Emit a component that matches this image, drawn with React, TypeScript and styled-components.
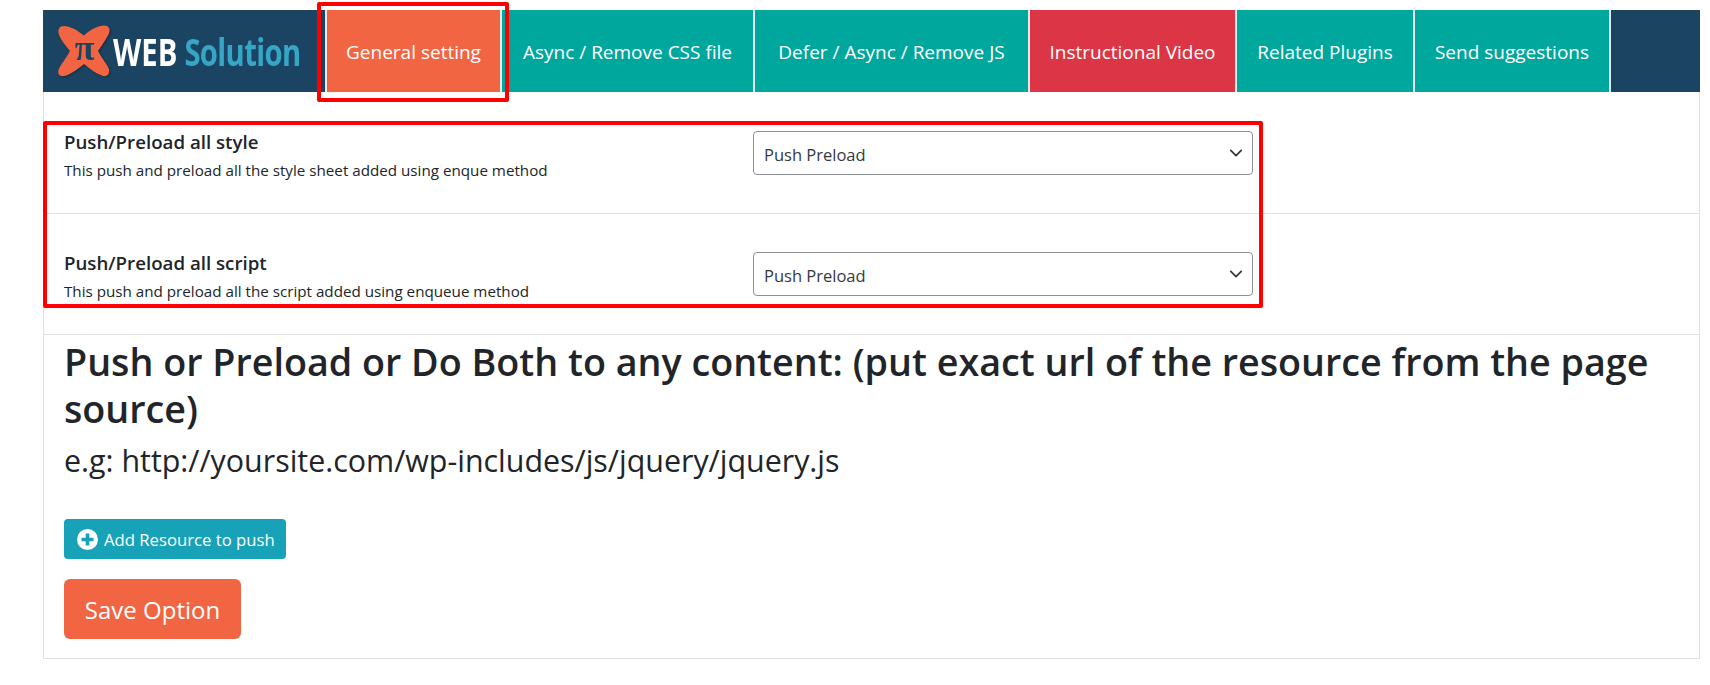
import React from "react";
import styled, { createGlobalStyle } from "styled-components";

const chevron =
  "data:image/svg+xml,%3csvg xmlns='http://www.w3.org/2000/svg' viewBox='0 0 16 16'%3e%3cpath fill='none' stroke='%23343a40' stroke-linecap='round' stroke-linejoin='round' stroke-width='2' d='m2 5 6 6 6-6'/%3e%3c/svg%3e";

const GlobalStyle = createGlobalStyle`
  html, body {
    margin: 0;
    padding: 0;
    background: #fff;
    font-family: "Open Sans", "Noto Sans", sans-serif;
    color: #212529;
    overflow: hidden;
  }
  * { box-sizing: border-box; }
`;

const Page = styled.div`
  position: relative;
  width: 1710px;
  height: 685px;
  padding: 10px 10px 0 43px;
`;

const Card = styled.div`
  border: 1px solid #e0e0e0;
  border-top: 0;
  height: 649px;
  display: flex;
  flex-direction: column;
`;

const Nav = styled.nav`
  display: flex;
  height: 82px;
  margin-left: -1px;
  margin-right: -1px;
  background: #1b4462;
`;

const Brand = styled.div`
  width: 282px;
  display: flex;
  align-items: center;
  padding-left: 14px;
  flex: none;
`;

const BrandText = styled.div`
  display: flex;
  gap: 9px;
  margin-left: 2px;
  font-weight: 700;
  font-size: 37px;
  line-height: 1;
  transform: scaleX(0.79);
  transform-origin: left center;
  white-space: nowrap;
`;

const BrandWeb = styled.span`
  color: #fff;
`;

const BrandSolution = styled.span`
  color: #36a6c6;
  letter-spacing: -0.8px;
`;

const Tab = styled.a<{ $bg: string; $w: number; $first?: boolean }>`
  flex: none;
  width: ${(p) => p.$w}px;
  display: flex;
  align-items: center;
  justify-content: center;
  padding-top: 2px;
  background: ${(p) => p.$bg};
  color: #fff;
  font-size: 19px;
  white-space: nowrap;
  border-right: 2px solid #e4e9ea;
  border-left: ${(p) => (p.$first ? "2px solid #e4e9ea" : "0")};
`;

const Rows = styled.div`
  padding-top: 1px;
`;

const Row = styled.div`
  height: 121px;
  padding: 38px 0 0 20px;
  display: flex;
  border-bottom: 1px solid #dee2e6;
`;

const RowText = styled.div`
  width: 689px;
  margin-top: -1px;
`;

const RowTitle = styled.div`
  font-size: 18.7px;
  font-weight: 600;
  line-height: 24px;
`;

const RowDesc = styled.div`
  font-size: 15.2px;
  line-height: 20px;
  margin-top: 6px;
`;

const Select = styled.select`
  appearance: none;
  width: 500px;
  height: 44px;
  padding: 3px 36px 0 10px;
  border: 1px solid #8c8f94;
  border-radius: 4px;
  background: #fff url("${chevron}") no-repeat right 9px center / 14px 14px;
  font-family: inherit;
  font-size: 16.5px;
  color: #343a40;
`;

const Body = styled.div`
  padding: 0 20px;
`;

const Heading = styled.h2`
  margin: 3px 0 0;
  font-size: 37.7px;
  line-height: 47px;
  font-weight: 600;
`;

const Example = styled.div`
  font-size: 30.4px;
  line-height: 42px;
  margin-top: 8px;
`;

const AddButton = styled.button`
  display: flex;
  align-items: center;
  gap: 6px;
  margin-top: 37px;
  width: 222px;
  height: 40px;
  padding: 0 13px;
  border: 0;
  border-radius: 4px;
  background: #17a2b8;
  color: #fff;
  font-family: inherit;
  font-size: 16.7px;
  white-space: nowrap;
`;

const SaveButton = styled.button`
  display: block;
  margin-top: 20px;
  width: 177px;
  height: 60px;
  border: 0;
  border-radius: 6px;
  background: #f16543;
  color: #fff;
  font-family: inherit;
  font-size: 24px;
`;

const Annotation = styled.div<{ $x: number; $y: number; $w: number; $h: number }>`
  position: absolute;
  left: ${(p) => p.$x}px;
  top: ${(p) => p.$y}px;
  width: ${(p) => p.$w}px;
  height: ${(p) => p.$h}px;
  border: 4px solid #fe0000;
  border-radius: 2px;
  pointer-events: none;
`;

const Logo = () => (
  <svg width="54" height="54" viewBox="0 0 54 54" style={{ flex: "none", filter: "drop-shadow(1px 1px 1px rgba(0,0,0,.35))" }}>
    <path
      d="M4 2.5C9 0.5 18 4 27 11.5C35 4 45 0 50 2C54 4 53 9 49 15C46 20 43 24 41 27C44 33 50 40 52 45C53 50 50 53 46 52C40 50 33 45 27 40C21 45 13 51 7 52C2 53 0 49 2 45C4 40 10 33 13 27C8 21 3 15 1.5 9C1 6 2 3.5 4 2.5Z"
      fill="#f16543"
    />
    <text x="27.5" y="36" textAnchor="middle" fontFamily="'Liberation Serif', serif" fontWeight="700" fontSize="36" fill="#1b4462">
      π
    </text>
  </svg>
);

const PlusIcon = () => (
  <svg width="21" height="21" viewBox="0 0 21 21" style={{ flex: "none" }}>
    <circle cx="10.5" cy="10.5" r="10.5" fill="#fff" />
    <path d="M10.5 4.5v12M4.5 10.5h12" stroke="#17a2b8" strokeWidth="3.6" />
  </svg>
);

const tabs = [
  { label: "General setting", bg: "#f16543", w: 177, first: true },
  { label: "Async / Remove CSS file", bg: "#00a79d", w: 253 },
  { label: "Defer / Async / Remove JS", bg: "#00a79d", w: 275 },
  { label: "Instructional Video", bg: "#dc3545", w: 207 },
  { label: "Related Plugins", bg: "#00a79d", w: 178 },
  { label: "Send suggestions", bg: "#00a79d", w: 196 },
];

const rows = [
  { title: "Push/Preload all style", desc: "This push and preload all the style sheet added using enque method" },
  { title: "Push/Preload all script", desc: "This push and preload all the script added using enqueue method" },
];

export default function App() {
  return (
    <Page>
      <GlobalStyle />
      <Card>
        <Nav>
          <Brand>
            <Logo />
            <BrandText>
              <BrandWeb>WEB</BrandWeb>
              <BrandSolution>Solution</BrandSolution>
            </BrandText>
          </Brand>
          {tabs.map((t) => (
            <Tab key={t.label} $bg={t.bg} $w={t.w} $first={t.first}>
              {t.label}
            </Tab>
          ))}
        </Nav>
        <Rows>
          {rows.map((r) => (
            <Row key={r.title}>
              <RowText>
                <RowTitle>{r.title}</RowTitle>
                <RowDesc>{r.desc}</RowDesc>
              </RowText>
              <Select defaultValue="push">
                <option value="push">Push Preload</option>
              </Select>
            </Row>
          ))}
        </Rows>
        <Body>
          <Heading>Push or Preload or Do Both to any content: (put exact url of the resource from the page source)</Heading>
          <Example>e.g: http://yoursite.com/wp-includes/js/jquery/jquery.js</Example>
          <AddButton>
            <PlusIcon />
            Add Resource to push
          </AddButton>
          <SaveButton>Save Option</SaveButton>
        </Body>
      </Card>
      <Annotation $x={317} $y={2} $w={192} $h={100} />
      <Annotation $x={43} $y={121} $w={1220} $h={187} />
    </Page>
  );
}
